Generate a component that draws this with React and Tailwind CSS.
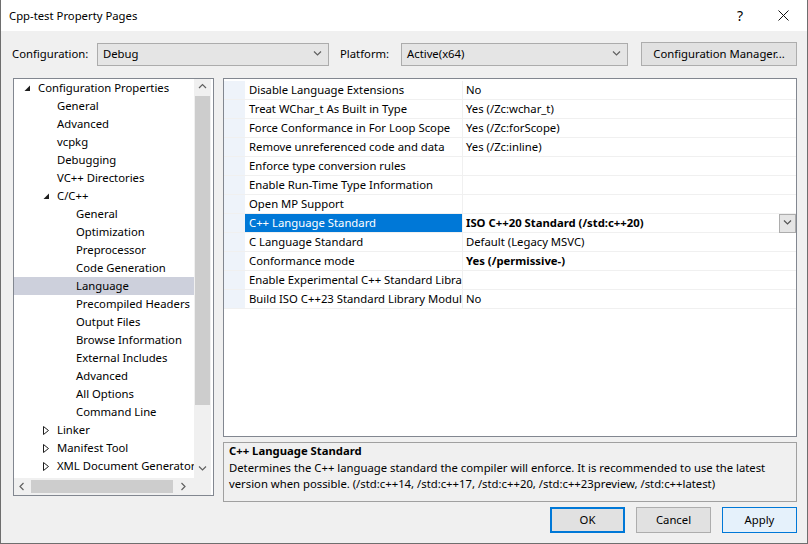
import React from 'react';

const treeItems = [
  { label: 'Configuration Properties', level: 0, state: 'open' },
  { label: 'General', level: 1 },
  { label: 'Advanced', level: 1 },
  { label: 'vcpkg', level: 1 },
  { label: 'Debugging', level: 1 },
  { label: 'VC++ Directories', level: 1 },
  { label: 'C/C++', level: 1, state: 'open' },
  { label: 'General', level: 2 },
  { label: 'Optimization', level: 2 },
  { label: 'Preprocessor', level: 2 },
  { label: 'Code Generation', level: 2 },
  { label: 'Language', level: 2, selected: true },
  { label: 'Precompiled Headers', level: 2 },
  { label: 'Output Files', level: 2 },
  { label: 'Browse Information', level: 2 },
  { label: 'External Includes', level: 2 },
  { label: 'Advanced', level: 2 },
  { label: 'All Options', level: 2 },
  { label: 'Command Line', level: 2 },
  { label: 'Linker', level: 1, state: 'closed' },
  { label: 'Manifest Tool', level: 1, state: 'closed' },
  { label: 'XML Document Generator', level: 1, state: 'closed' },
];

const properties = [
  { name: 'Disable Language Extensions', value: 'No' },
  { name: 'Treat WChar_t As Built in Type', value: 'Yes (/Zc:wchar_t)' },
  { name: 'Force Conformance in For Loop Scope', value: 'Yes (/Zc:forScope)' },
  { name: 'Remove unreferenced code and data', value: 'Yes (/Zc:inline)' },
  { name: 'Enforce type conversion rules', value: '' },
  { name: 'Enable Run-Time Type Information', value: '' },
  { name: 'Open MP Support', value: '' },
  { name: 'C++ Language Standard', value: 'ISO C++20 Standard (/std:c++20)', bold: true, selected: true },
  { name: 'C Language Standard', value: 'Default (Legacy MSVC)' },
  { name: 'Conformance mode', value: 'Yes (/permissive-)', bold: true },
  { name: 'Enable Experimental C++ Standard Library Modules', value: '' },
  { name: 'Build ISO C++23 Standard Library Modules', value: 'No' },
];

const indent = ['pl-[5px]', 'pl-[24px]', 'pl-[43px]'];

const Chevron = ({ dir = 'down', className = '' }) => {
  const paths = {
    down: 'M1 1.5 L4.5 5 L8 1.5',
    up: 'M1 5 L4.5 1.5 L8 5',
    left: 'M5.5 1 L2 4.5 L5.5 8',
    right: 'M2.5 1 L6 4.5 L2.5 8',
  };
  return (
    <svg width="9" height="9" viewBox="0 0 9 9" className={className}>
      <path d={paths[dir]} fill="none" stroke="currentColor" strokeWidth="1.2" />
    </svg>
  );
};

const Expander = ({ state }) => {
  if (state === 'open') {
    return (
      <svg width="7" height="7" viewBox="0 0 7 7" className="ml-[5px]">
        <polygon points="6,0.5 6,6 0.5,6" fill="#1e1e1e" />
      </svg>
    );
  }
  if (state === 'closed') {
    return (
      <svg width="7" height="9" viewBox="0 0 7 9" className="ml-[5px]">
        <polygon points="0.5,0.5 5.5,4.5 0.5,8.5" fill="none" stroke="#1e1e1e" strokeWidth="1" />
      </svg>
    );
  }
  return null;
};

const Combo = ({ value, width }) => (
  <div className={`${width} h-[23px] shrink-0 border border-[#acacac] bg-[#e5e5e5] flex items-center justify-between pl-[5px] pr-[6px]`}>
    <span>{value}</span>
    <Chevron dir="down" className="text-[#606060]" />
  </div>
);

const Button = ({ children, variant }) => {
  const styles = {
    default: 'border-2 border-[#0078d7] bg-[#e1e1e1]',
    normal: 'border border-[#adadad] bg-[#e1e1e1]',
    hover: 'border border-[#0078d7] bg-[#e5f1fb]',
  };
  return (
    <button className={`w-[75px] h-[26px] flex items-center justify-center ${styles[variant]}`}>
      {children}
    </button>
  );
};

export default function App() {
  return (
    <div className="w-[808px] h-[544px] bg-[#f0f0f0] border-l border-r border-b border-[#6e6e6e] flex flex-col font-['Noto_Sans','Open_Sans',sans-serif] text-[11.3px] leading-none text-black overflow-hidden">
      {/* Title bar */}
      <div className="h-[31px] bg-white flex items-center shrink-0">
        <span className="pl-[8px]">Cpp-test Property Pages</span>
        <span className="ml-auto mr-[35px] text-[14px]">?</span>
        <svg width="11" height="11" viewBox="0 0 11 11" className="mr-[18px]">
          <path d="M0.5 0.5 L10.5 10.5 M10.5 0.5 L0.5 10.5" stroke="#111" strokeWidth="1" />
        </svg>
      </div>

      {/* Configuration row */}
      <div className="flex items-center mt-[11px] h-[24px] pl-[11px] shrink-0">
        <span className="w-[85px] shrink-0">Configuration:</span>
        <Combo value="Debug" width="w-[232px]" />
        <span className="ml-[11px] w-[61px] shrink-0">Platform:</span>
        <Combo value="Active(x64)" width="w-[227px]" />
        <button className="ml-[13px] w-[156px] h-[24px] shrink-0 border border-[#adadad] bg-[#e1e1e1] flex items-center justify-center">
          Configuration Manager...
        </button>
      </div>

      {/* Main area */}
      <div className="flex items-start mt-[12px] pl-[12px] shrink-0">
        {/* Tree */}
        <div className="w-[201px] h-[418px] shrink-0 border border-[#828790] bg-white flex flex-col">
          <div className="flex h-[399px]">
            <div className="w-[180px] shrink-0 overflow-hidden">
              {treeItems.map((item, i) => (
                <div
                  key={i}
                  className={`h-[18px] flex items-center whitespace-nowrap ${indent[item.level]} ${item.selected ? 'bg-[#cdd0dc]' : ''}`}
                >
                  <div className="w-[19px] shrink-0 flex items-center">
                    <Expander state={item.state} />
                  </div>
                  <span>{item.label}</span>
                </div>
              ))}
            </div>
            {/* vertical scrollbar */}
            <div className="w-[17px] shrink-0 bg-[#f0f0f0] flex flex-col items-center">
              <div className="h-[17px] flex items-center justify-center text-[#606060]">
                <Chevron dir="up" />
              </div>
              <div className="w-[15px] h-[309px] bg-[#cdcdcd]" />
              <div className="flex-1" />
              <div className="h-[17px] flex items-center justify-center text-[#606060]">
                <Chevron dir="down" />
              </div>
            </div>
          </div>
          {/* horizontal scrollbar */}
          <div className="flex h-[17px]">
            <div className="w-[180px] shrink-0 bg-[#f0f0f0] flex items-center">
              <div className="w-[17px] shrink-0 flex justify-center text-[#606060]">
                <Chevron dir="left" />
              </div>
              <div className="w-[142px] shrink-0 h-[13px] bg-[#cdcdcd]" />
              <div className="flex-1 flex justify-center text-[#606060]">
                <Chevron dir="right" />
              </div>
            </div>
            <div className="w-[17px] shrink-0 bg-[#f0f0f0]" />
          </div>
        </div>

        {/* Right column */}
        <div className="ml-[9px] w-[574px] shrink-0 flex flex-col">
          {/* Property grid */}
          <div className="h-[359px] shrink-0 border border-[#828790] bg-white pt-[2px]">
            {properties.map((p, i) => (
              <div key={i} className="flex h-[19px] border-b border-[#f0f0f0]">
                <div className="w-[21px] shrink-0 bg-[#eef3fa]" />
                <div
                  className={`w-[217px] shrink-0 flex items-center pl-[4px] overflow-hidden whitespace-nowrap ${p.selected ? 'bg-[#0078d7] text-white' : ''}`}
                >
                  {p.name}
                </div>
                <div className="w-[1px] shrink-0 bg-[#f0f0f0]" />
                <div className={`flex-1 flex items-center pl-[3px] relative whitespace-nowrap ${p.bold ? 'font-bold' : ''}`}>
                  {p.value}
                  {p.selected && (
                    <div className="absolute right-0 top-0 w-[17px] h-[19px] border border-[#adadad] bg-[#e5e5e5] flex items-center justify-center text-[#555]">
                      <Chevron dir="down" />
                    </div>
                  )}
                </div>
              </div>
            ))}
          </div>

          {/* Description */}
          <div className="mt-[5px] h-[60px] shrink-0 border border-[#a0a0a0] px-[5px] pt-0">
            <div className="font-bold h-[16px] flex items-center">C++ Language Standard</div>
            <div className="leading-[16px] mt-[1px]">
              Determines the C++ language standard the compiler will enforce. It is recommended to use the latest
              version when possible. (/std:c++14, /std:c++17, /std:c++20, /std:c++23preview, /std:c++latest)
            </div>
          </div>

          {/* Buttons */}
          <div className="flex justify-end gap-[11px] mt-[5px] shrink-0">
            <Button variant="default">OK</Button>
            <Button variant="normal">Cancel</Button>
            <Button variant="hover">Apply</Button>
          </div>
        </div>
      </div>
    </div>
  );
}
